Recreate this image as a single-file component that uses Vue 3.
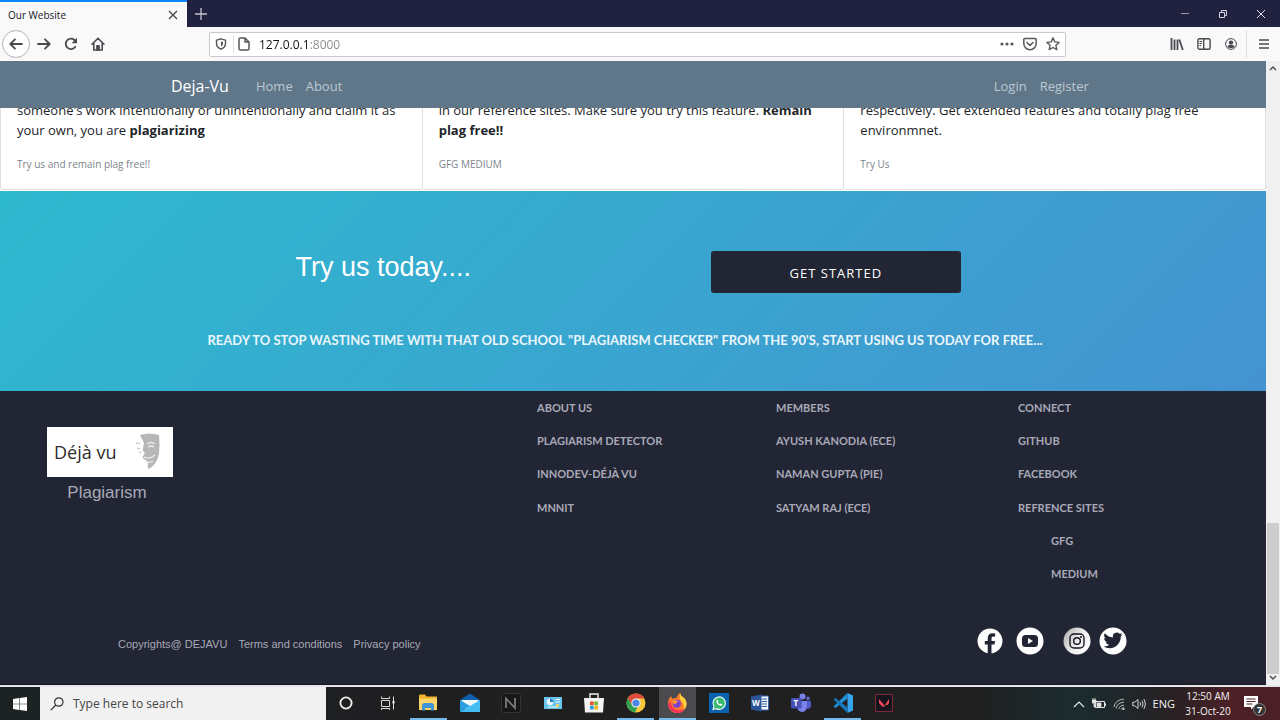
<script setup>
import { ref } from 'vue'

const address = ref('127.0.0.1:8000')
const query = ref('')

const cards = [
  {
    text: "someone's work intentionally or unintentionally and claim it as your own, you are ",
    strong: 'plagiarizing',
    note: 'Try us and remain plag free!!',
  },
  {
    text: 'in our reference sites. Make sure you try this feature. ',
    strong: 'Remain plag free!!',
    note: 'GFG MEDIUM',
  },
  {
    text: 'respectively. Get extended features and totally plag free environmnet.',
    strong: '',
    note: 'Try Us',
  },
]

const columns = [
  [{ t: 'About us' }, { t: 'Plagiarism Detector' }, { t: 'InnoDev-Déjà Vu' }, { t: 'MNNIT' }],
  [{ t: 'Members' }, { t: 'Ayush Kanodia (ECE)' }, { t: 'Naman Gupta (PIE)' }, { t: 'Satyam Raj (ECE)' }],
  [
    { t: 'Connect' },
    { t: 'Github' },
    { t: 'Facebook' },
    { t: 'Refrence Sites' },
    { t: 'GFG', sub: true },
    { t: 'Medium', sub: true },
  ],
]
</script>

<template>
  <div class="screen">
    <header class="titlebar">
      <div class="tab">
        <span>Our Website</span>
        <button type="button" aria-label="Close tab">
          <svg width="10" height="10" viewBox="0 0 10 10"><path d="M1 1l8 8M9 1l-8 8" stroke="#444" stroke-width="1.3" /></svg>
        </button>
      </div>
      <button type="button" class="newtab" aria-label="New tab">
        <svg width="12" height="12" viewBox="0 0 12 12"><path d="M6 0v12M0 6h12" stroke="#c4c4cf" stroke-width="1.3" /></svg>
      </button>
      <div class="winbtns">
        <button type="button" aria-label="Minimize">
          <svg width="10" height="10" viewBox="0 0 10 10"><path d="M1 4.500h8" stroke="#9a9bb0" /></svg>
        </button>
        <button type="button" aria-label="Restore">
          <svg width="10" height="10" viewBox="0 0 10 10" fill="none" stroke="#d4d4de"><path d="M1.500 3.500h5v5h-5zM3.500 3V1.500h5v5H7" /></svg>
        </button>
        <button type="button" aria-label="Close">
          <svg width="10" height="10" viewBox="0 0 10 10"><path d="M1 1l8 8M9 1l-8 8" stroke="#e2e2ea" /></svg>
        </button>
      </div>
    </header>

    <div class="toolbar">
      <div class="navbtns">
        <button type="button" class="back" aria-label="Back">
          <svg width="14" height="14" viewBox="0 0 14 14" fill="none" stroke="#4a4a4f" stroke-width="1.8" stroke-linecap="round" stroke-linejoin="round"><path d="M13 7H1.500M6 2.300L1.300 7 6 11.700" /></svg>
        </button>
        <button type="button" aria-label="Forward">
          <svg width="14" height="14" viewBox="0 0 14 14" fill="none" stroke="#4a4a4f" stroke-width="1.8" stroke-linecap="round" stroke-linejoin="round"><path d="M1 7h11.500M8 2.300L12.700 7 8 11.700" /></svg>
        </button>
        <button type="button" aria-label="Reload">
          <svg width="14" height="14" viewBox="0 0 14 14" fill="none" stroke="#4a4a4f" stroke-width="1.8" stroke-linecap="round"><path d="M11.300 9.800A5.200 5.200 0 1 1 11 3.600" /><path d="M13 .8v5.400H7.600z" fill="#4a4a4f" stroke="none" /></svg>
        </button>
        <button type="button" aria-label="Home">
          <svg width="14" height="14" viewBox="0 0 14 14" fill="none" stroke="#4a4a4f" stroke-width="1.600" stroke-linecap="round" stroke-linejoin="round"><path d="M1 7.200L7 1.200l6 6M2.800 6.500V13h8.400V6.500" /><path d="M5.700 13V8.500h2.600V13z" fill="#4a4a4f" stroke-width="1" /></svg>
        </button>
      </div>
      <div class="urlbar">
        <svg width="12" height="12" viewBox="0 0 12 12" fill="none" stroke="#57575c" stroke-width="1.400"><path d="M6 .8l4.500 1.400v3.300c0 2.700-1.800 4.600-4.500 5.700C3.300 10.100 1.500 8.200 1.500 5.500V2.200z" /><path d="M6 3.400v5c1.300-.7 2-1.700 2-3V3.900z" fill="#57575c" stroke="none" /></svg>
        <i class="sep"></i>
        <svg width="12" height="14" viewBox="0 0 12 14" fill="none" stroke="#57575c" stroke-width="1.500" stroke-linejoin="round"><path d="M2.500 1H7l4 4v6.500q0 1.500-1.500 1.500h-7Q1 13 1 11.500v-9Q1 1 2.500 1zM7 1v4h4" /></svg>
        <input v-model="address" type="text" aria-label="Address" />
        <svg width="14" height="14" viewBox="0 0 14 14" fill="#57575c"><circle cx="2" cy="7" r="1.600" /><circle cx="7" cy="7" r="1.600" /><circle cx="12" cy="7" r="1.600" /></svg>
        <svg width="14" height="14" viewBox="0 0 14 14" fill="none" stroke="#57575c" stroke-width="1.500" stroke-linecap="round" stroke-linejoin="round"><path d="M2 1.500h10q1.200 0 1.200 1.200V6.500a6.200 6.200 0 0 1-12.400 0V2.700Q.8 1.500 2 1.500zM4 5.500l3 2.900 3-2.900" /></svg>
        <svg width="14" height="14" viewBox="0 0 14 14" fill="none" stroke="#57575c" stroke-width="1.400" stroke-linejoin="round"><path d="M7 .9l1.800 4 4.300.5-3.200 2.900.9 4.300L7 10.500l-3.800 2.100.9-4.300L.9 5.400l4.300-.5z" /></svg>
      </div>
      <div class="tools">
        <button type="button" aria-label="Library">
          <svg width="14" height="14" viewBox="0 0 14 14" fill="none" stroke="#4a4a4f" stroke-width="1.800"><path d="M1.500 1v12M4.500 2.500V13M7.500 2.500V13M9.300 2.500L12.800 13" /></svg>
        </button>
        <button type="button" aria-label="Sidebar">
          <svg width="14" height="14" viewBox="0 0 14 14" fill="none" stroke="#4a4a4f" stroke-width="1.400"><rect x=".9" y="1.700" width="12.200" height="10.600" rx="1.800" /><path d="M6.700 2v10" /><path d="M2.500 4.500h2.500M2.500 6.500h2.500M2.500 8.500h1.500" stroke-width="1" /></svg>
        </button>
        <button type="button" aria-label="Account">
          <svg width="12" height="12" viewBox="0 0 12 12"><circle cx="6" cy="6" r="5.400" fill="none" stroke="#4a4a4f" /><circle cx="6" cy="4.600" r="2.200" fill="#4a4a4f" /><path d="M2.200 8.600q1-1.400 2.500-1.600h2.600q1.500.2 2.500 1.600Q8.600 10.200 6 10.200T2.200 8.600z" fill="#4a4a4f" /></svg>
        </button>
        <button type="button" class="menu" aria-label="Menu">
          <svg width="10" height="12" viewBox="0 0 10 12"><path d="M0 2h10M0 6h10M0 10h10" stroke="#4a4a4f" stroke-width="1.600" /></svg>
        </button>
      </div>
    </div>

    <div class="viewport">
      <div class="page">
        <nav class="sitenav">
          <a class="brand" href="#">Deja-Vu</a>
          <a href="#">Home</a>
          <a href="#">About</a>
          <a class="push" href="#">Login</a>
          <a href="#">Register</a>
        </nav>

        <section class="cards">
          <article v-for="c in cards" :key="c.note" class="card">
            <p>{{ c.text }}<b v-if="c.strong">{{ c.strong }}</b></p>
            <small>{{ c.note }}</small>
          </article>
        </section>

        <section class="hero">
          <div class="cta">
            <h2>Try us today....</h2>
            <button type="button">GET STARTED</button>
          </div>
          <p>Ready to stop wasting time with that old school "Plagiarism checker" from the 90's, start using us today for free...</p>
        </section>

        <footer class="footer">
          <div class="foot-top">
            <div class="brandbox">
              <div class="logo">
                <span>Déjà vu</span>
                <svg width="26" height="40" viewBox="0 0 26 40">
                  <path d="M5 3q9-3 19 0 1 10 0 19-2 10-10 15-2-1-1-5l-2-4q-4-1-3-4l2-3q-3-2-2-5l1-5Q7 7 5 3z" fill="#b7b7b7" />
                  <path d="M12 12q4-3 8 0M13 15q3-2 6 0M9 25q5 3 11-2M11 30q4 1 7-1" fill="none" stroke="#ededed" stroke-width="1.300" />
                  <path d="M1 12q2-2 4 0M2 16l3 1M4 20l2 1" fill="none" stroke="#cfcfcf" stroke-width="1.500" />
                </svg>
              </div>
              <span class="caption">Plagiarism</span>
            </div>
            <ul v-for="(col, i) in columns" :key="i">
              <li v-for="l in col" :key="l.t" :class="{ sub: l.sub }"><a href="#">{{ l.t }}</a></li>
            </ul>
          </div>
          <div class="foot-bottom">
            <span>Copyrights@ DEJAVU</span>
            <a href="#">Terms and conditions</a>
            <a href="#">Privacy policy</a>
            <div class="social">
              <a href="#" aria-label="Facebook">
                <svg width="26" height="26" viewBox="0 0 26 26"><circle cx="13" cy="13" r="12.500" fill="#fff" /><path d="M10.700 26v-9.400H7.800v-3.500h2.900v-2.600c0-3.400 1.800-5.300 5-5.300l2.500.2v3.200h-1.700c-1.500 0-2 .8-2 2v2.500h3.600l-.6 3.500h-3V26z" fill="#222533" /></svg>
              </a>
              <a href="#" aria-label="YouTube">
                <svg width="28" height="28" viewBox="0 0 28 28"><circle cx="14" cy="14" r="13.500" fill="#fff" /><rect x="6" y="8" width="16" height="12" rx="3.500" fill="#222533" /><path d="M12 11v6l5-3z" fill="#fff" /></svg>
              </a>
              <a class="gap" href="#" aria-label="Instagram">
                <svg width="28" height="28" viewBox="0 0 28 28"><defs><linearGradient id="ig" x1="0" y1="0" x2="1" y2=".6"><stop offset="0" stop-color="#a8a8a8" /><stop offset=".6" stop-color="#eee" /><stop offset="1" stop-color="#fff" /></linearGradient></defs><circle cx="14" cy="14" r="13.500" fill="url(#ig)" /><rect x="7" y="7" width="14" height="14" rx="4" fill="none" stroke="#16171f" stroke-width="1.400" /><circle cx="14" cy="14" r="3.300" fill="none" stroke="#16171f" stroke-width="1.400" /><circle cx="18" cy="10" r="1" fill="#16171f" /></svg>
              </a>
              <a href="#" aria-label="Twitter">
                <svg width="28" height="28" viewBox="0 0 28 28"><circle cx="14" cy="14" r="13.500" fill="#fff" /><path transform="translate(4.500 3.800) scale(.8)" d="M23.950 4.570a10 10 0 0 1-2.820.77 4.960 4.960 0 0 0 2.160-2.720c-.95.560-2 .960-3.120 1.180a4.920 4.920 0 0 0-8.380 4.480C7.690 8.100 4.070 6.130 1.640 3.160a4.920 4.920 0 0 0 1.520 6.570 4.900 4.900 0 0 1-2.230-.61v.06a4.920 4.920 0 0 0 3.950 4.830 5 5 0 0 1-2.210.08 4.940 4.940 0 0 0 4.600 3.420A9.870 9.870 0 0 1 0 19.540a13.990 13.990 0 0 0 7.550 2.210c9.050 0 14-7.500 14-13.980 0-.21 0-.42-.02-.63a9.940 9.940 0 0 0 2.420-2.570z" fill="#222533" /></svg>
              </a>
            </div>
          </div>
        </footer>
      </div>
      <div class="scroll">
        <svg width="8" height="6" viewBox="0 0 8 6"><path d="M1 5l3-3 3 3" fill="none" stroke="#505050" stroke-width="1.500" /></svg>
        <div class="track"><i></i></div>
        <svg width="8" height="6" viewBox="0 0 8 6"><path d="M1 1l3 3 3-3" fill="none" stroke="#505050" stroke-width="1.500" /></svg>
      </div>
    </div>

    <div class="taskbar">
      <button type="button" class="start" aria-label="Start">
        <svg width="14" height="14" viewBox="0 0 14 14" fill="#fff"><path d="M0 2l6.500-1v5.700H0zM7 .9L14 0v6.700H7zM0 7.200h6.500V13L0 12zM7 7.200h7V14l-7-1z" /></svg>
      </button>
      <label class="search">
        <svg width="14" height="14" viewBox="0 0 14 14" fill="none" stroke="#333" stroke-width="1.200"><circle cx="8.800" cy="5" r="4.200" /><path d="M5.800 8L.8 13.200" /></svg>
        <input v-model="query" type="text" placeholder="Type here to search" aria-label="Type here to search" />
      </label>
      <div class="apps">
        <button type="button" aria-label="Cortana"><svg viewBox="0 0 20 20"><circle cx="10" cy="10" r="5.600" fill="none" stroke="#f2f2f2" stroke-width="1.800" /></svg></button>
        <button type="button" aria-label="Task view"><svg viewBox="0 0 20 20" fill="none" stroke="#d8d8d8"><path d="M4.500 7.500h8v6h-8zM4.500 3.500v2h8v-2M4.500 17v-1.500h8V17M16.500 3.500v13" /><path d="M15.500 8h2v2.500h-2z" fill="#fff" stroke="none" /></svg></button>
        <button type="button" class="open" aria-label="File Explorer"><svg viewBox="0 0 20 20"><path d="M1 2.500q0-1 1-1h5l1.500 2H19V17H1z" fill="#f3b32c" /><path d="M1 5.500h18V17H1z" fill="#fbd467" /><path d="M4 17.500v-5q0-2.500 2.500-2.500h7q2.500 0 2.500 2.500v5h-3V15H7v2.500z" fill="#3f95d8" /></svg></button>
        <button type="button" aria-label="Mail"><svg viewBox="0 0 20 20"><path d="M0 7L10 .5 20 7v3H0z" fill="#0f5fae" /><path d="M1.500 7h17v9h-17z" fill="#eef7fc" /><path d="M0 7l10 6L0 19z" fill="#2a9fe0" /><path d="M20 7v12H0l10-6z" fill="#43bdf2" /></svg></button>
        <button type="button" aria-label="Nitro"><svg viewBox="0 0 20 20"><rect x=".5" y=".5" width="19" height="19" rx="2" fill="#171717" stroke="#333" /><path d="M5 15V5.500L14 15V5" fill="none" stroke="#7b7b7b" stroke-width="1.800" /></svg></button>
        <button type="button" aria-label="Control Panel"><svg viewBox="0 0 20 20"><rect x="1" y="4" width="18" height="12" fill="#67c5ee" /><circle cx="7" cy="9" r="3.300" fill="#e9f7fd" /><path d="M7 9V5.700A3.300 3.300 0 0 1 10.300 9z" fill="#2b7fc0" /><path d="M12.500 6.500h4.500M12.500 9h4.500M5 14h10" stroke="#fff" /><rect x="13" y="11" width="3" height="3" fill="#e8d36c" /></svg></button>
        <button type="button" aria-label="Store"><svg viewBox="0 0 20 20"><path d="M6 5V1h8v4" fill="none" stroke="#f0f0f0" stroke-width="1.400" /><path d="M0 5h20l-1 14.500H1z" fill="#f3f3f3" /><path d="M6 8.500h3.700v3.700H6z" fill="#e8502c" /><path d="M10.300 8.500H14v3.700h-3.700z" fill="#7db72f" /><path d="M6 12.800h3.700v3.700H6z" fill="#2a9fe0" /><path d="M10.300 12.800H14v3.700h-3.700z" fill="#f7b718" /></svg></button>
        <button type="button" class="open" aria-label="Chrome"><svg viewBox="0 0 20 20"><circle cx="10" cy="10" r="9.500" fill="#f9c73b" /><path d="M1.800 5.200A9.500 9.500 0 0 1 18.400 5.600H10L5.700 12.500z" fill="#de4b3c" /><path d="M1.800 5.200l4.500 7.300 5.300 1.200-2.600 5.800A9.500 9.500 0 0 1 1.800 5.200z" fill="#2da150" /><circle cx="10" cy="10" r="4.600" fill="#f5f5f5" /><circle cx="10" cy="10" r="3.600" fill="#4a88ec" /></svg></button>
        <button type="button" class="open active" aria-label="Firefox"><svg viewBox="0 0 20 20"><path d="M1 11Q1 6 4 3l1.500 3q2-1.500 4-1Q10 2 13 0q.5 3 3.500 4.500Q19.500 7 19.500 11a9.200 9.200 0 0 1-18.500 0z" fill="#ff7a2b" /><path d="M13 0q.5 3 3.500 4.500Q19.500 7 19.500 11q0 4-3.500 6.500 2-6-2-10-2-3-1-7.500z" fill="#ffd23c" /><path d="M1 11q1 7.500 9 9 6 0 8.500-5-4 3.500-9 2Q4 15 3.500 8z" fill="#f5325c" /><circle cx="9.800" cy="10.800" r="4" fill="#7b3fd1" /><path d="M5.500 8q3-2 6 1-3 .5-3 2.500-2 0-3-3.500z" fill="#ff9b2f" /></svg></button>
        <button type="button" aria-label="WhatsApp"><svg viewBox="0 0 20 20"><path d="M0 0h20v20H0z" fill="#0862b0" /><path d="M4 16.500l.9-3.200a6.200 6.200 0 1 1 2.400 2.300z" fill="#37b96c" stroke="#e9f6ef" stroke-width="1.200" /><path d="M7.800 7q.8-.6 1.200.3l.4 1-.6.900q.8 1.500 2.200 2l.9-.8 1.600.9q-.2 1.500-1.700 1.500-4-.8-4.500-4.500z" fill="#fff" /></svg></button>
        <button type="button" aria-label="Word"><svg viewBox="0 0 20 20"><path d="M10 3h8.500v14H10z" fill="#f5f8fc" stroke="#3a66ab" /><path d="M12 6h5M12 8.500h5M12 11h5M12 13.500h5" stroke="#2f5ca8" /><path d="M1 3.500L11.500 1.500v17L1 16.500z" fill="#2a5699" /><text x="2" y="13" class="glyph">W</text></svg></button>
        <button type="button" aria-label="Teams"><svg viewBox="0 0 20 20"><circle cx="17" cy="5.500" r="2" fill="#5b62c4" /><path d="M14 8h6v5.500q-1 3-4.500 2.500z" fill="#5059c9" /><circle cx="11.500" cy="3.600" r="3" fill="#7b83eb" /><path d="M7 8h9v6q-1 5-5 5-4-.5-4.500-4z" fill="#7b83eb" /><rect y="5" width="10.500" height="10.500" rx="1" fill="#474fb8" /><text x="2.600" y="13" class="glyph">T</text></svg></button>
        <button type="button" class="open" aria-label="Visual Studio Code"><svg viewBox="0 0 20 20"><path d="M14.500 0L20 2.500v15L14.500 20z" fill="#35a6ee" /><path d="M14.500 0v5.500L2.500 15 .5 13.500z" fill="#1f8fd8" /><path d="M14.500 20v-5.500L2.500 5 .5 6.500z" fill="#1577bd" /></svg></button>
        <button type="button" aria-label="Valorant"><svg viewBox="0 0 20 20"><rect x="1.500" y="1.500" width="17" height="17" fill="#16141c" stroke="#7a2b3a" /><path d="M5 6l6.500 7.500H8L5 10zM15 6v4l-1.500 2H11z" fill="#f2475a" /></svg></button>
      </div>
      <div class="tray">
        <svg width="12" height="8" viewBox="0 0 12 8"><path d="M1 7l5-5 5 5" fill="none" stroke="#e5e5e5" stroke-width="1.200" /></svg>
        <svg width="14" height="12" viewBox="0 0 14 12"><path d="M3.500 3.500h9v6h-9zM12.500 5.500h1v2h-1" fill="none" stroke="#e5e5e5" /><path d="M5 5h4v3.500H5zM0 2h4v3H0zM1 0v2M3 0v2M2 5v4h2" fill="#e5e5e5" stroke="#e5e5e5" stroke-width=".8" /></svg>
        <svg width="12" height="12" viewBox="0 0 12 12" fill="none" stroke="#b9b9b9"><path d="M1 9Q2 2 11 1M3 10.500Q4 5 11 4M5.500 11Q6.500 7.500 11 7M8 11.500Q8.500 10 11 9.500" /><circle cx="10.500" cy="11" r=".8" fill="#fff" /></svg>
        <svg width="14" height="12" viewBox="0 0 14 12" fill="none" stroke="#d5d5d5"><path d="M.8 4.200h2L6 1.500v9L2.800 7.800h-2zM8 4.200q1.200 1.800 0 3.600M10 2.700q2.200 3.300 0 6.600M12 1.200q3 4.800 0 9.600" /></svg>
        <span class="lang">ENG</span>
        <div class="clock"><span>12:50 AM</span><span>31-Oct-20</span></div>
        <button type="button" class="notes" aria-label="7 notifications">
          <svg width="14" height="14" viewBox="0 0 14 14"><path d="M0 0h14v11H9.500L7 13.500V11H0z" fill="#fff" /><path d="M2.500 3h9M2.500 5.500h9M2.500 8h6" stroke="#4b2027" /></svg>
          <b>7</b>
        </button>
      </div>
    </div>
  </div>
</template>

<style>
body {
  background: #fff;
}
</style>

<style scoped>
.screen {
  min-height: 100vh;
  display: flex;
  flex-direction: column;
  font-family: "Open Sans", "Noto Sans", sans-serif;
  color: #212529;
}
.screen * {
  box-sizing: border-box;
}
button {
  border: 0;
  padding: 0;
  background: none;
  font: inherit;
  display: flex;
  align-items: center;
  justify-content: center;
}
a {
  color: inherit;
  text-decoration: none;
}
svg {
  display: block;
  flex: none;
}
input {
  border: 0;
  outline: 0;
  padding: 0;
  min-width: 0;
  flex: 1;
  background: none;
  font: inherit;
}

.titlebar {
  height: 27px;
  display: flex;
  background: #20223f;
}
.tab {
  width: 187px;
  padding: 0 9px 0 8px;
  display: flex;
  align-items: center;
  justify-content: space-between;
  background: #f9f9fa;
  border-top: 2px solid #0a84ff;
  font-size: 10px;
  color: #18181c;
}
.newtab {
  width: 28px;
}
.winbtns {
  margin-left: auto;
  display: flex;
}
.winbtns button {
  width: 38px;
}

.toolbar {
  height: 34px;
  display: flex;
  align-items: center;
  justify-content: space-between;
  background: #f9f9fa;
}
.navbtns {
  width: 209px;
  display: flex;
  align-items: center;
  padding-left: 2px;
}
.navbtns button {
  width: 27px;
  height: 28px;
}
.navbtns .back {
  width: 28px;
  border: 1px solid #b5b5b8;
  border-radius: 50%;
  background: #fff;
}
.urlbar {
  flex: 1;
  height: 25px;
  display: flex;
  align-items: center;
  gap: 9px;
  padding: 0 5px;
  border: 1px solid #c9c9cc;
  border-radius: 2px;
  background: #fff;
}
.sep {
  width: 1px;
  height: 17px;
  margin-right: -5px;
  margin-left: -3px;
  background: #e3e3e5;
}
.urlbar input {
  font-size: 12px;
  color: transparent;
  caret-color: #222;
  background: linear-gradient(90deg, #111 49px, #8a8a8f 49px);
  background-clip: text;
}
.tools {
  width: 214px;
  display: flex;
  justify-content: flex-end;
}
.tools button {
  width: 27px;
  height: 28px;
}
.tools .menu {
  width: 34px;
  margin-left: 2px;
  border-left: 1px solid #dedee0;
}

.viewport {
  flex: 1;
  display: flex;
}
.page {
  flex: 1;
  min-width: 0;
  display: flex;
  flex-direction: column;
}
.sitenav {
  height: 47px;
  padding: 3px 14% 0 13.5%;
  display: flex;
  align-items: center;
  gap: 13px;
  background: #60778a;
  color: #bdc8d0;
  font-size: 13px;
}
.brand {
  margin-right: 14px;
  font-size: 16px;
  color: #fff;
}
.push {
  margin-left: auto;
}
.cards {
  height: 83px;
  overflow: hidden;
  display: flex;
  align-items: flex-end;
  padding-bottom: 1px;
}
.card {
  flex: 1;
  height: 120px;
  padding: 0 16px 17px;
  display: flex;
  flex-direction: column;
  justify-content: flex-end;
  border: 1px solid #dfdfdf;
  border-left-width: 0;
  border-radius: 0 0 3px 3px;
}
.card:first-child {
  border-left-width: 1px;
}
.card p {
  margin: 0 0 16px;
  font-size: 13px;
  line-height: 20px;
}
.card small {
  font-size: 10px;
  line-height: 16px;
  color: #7b838a;
}

.hero {
  height: 200px;
  padding-top: 60px;
  background: linear-gradient(135deg, #2eb9cf, #4493d0);
  color: #fff;
}
.cta {
  padding: 0 16.1% 0 12.4%;
  display: grid;
  grid-template-columns: 1fr 1fr;
  justify-items: center;
}
.cta h2 {
  margin: 0;
  font: 27px/32px "Liberation Sans", Arial, sans-serif;
}
.cta button {
  width: 250px;
  height: 42px;
  padding-top: 2px;
  border-radius: 3px;
  background: #222533;
  color: #fff;
  font-size: 13px;
  letter-spacing: 1px;
}
.hero p {
  margin: 37px 16px 0 0;
  text-align: center;
  text-transform: uppercase;
  font: bold 13px/20px Lato, "Liberation Sans", sans-serif;
  color: #eaf6fb;
}

.footer {
  flex: 1;
  min-height: 294px;
  display: flex;
  flex-direction: column;
  background: #222533;
  border-bottom: 1px solid #15161f;
  color: #a8a9b8;
}
.foot-top {
  display: grid;
  grid-template-columns: 537fr 239fr 242fr 248fr;
}
.brandbox {
  width: 126px;
  margin: 36px 0 0 47px;
}
.logo {
  height: 50px;
  padding: 0 12px 0 7px;
  display: flex;
  align-items: center;
  justify-content: space-between;
  background: #fff;
  color: #2c2c2c;
  font-size: 18px;
}
.caption {
  display: block;
  padding: 6px 6px 0 0;
  text-align: center;
  font: 17px/20px "Liberation Sans", Arial, sans-serif;
}
.foot-top ul {
  min-height: 200px;
  margin: 0;
  padding: 0;
  list-style: none;
  display: grid;
  grid-template-rows: repeat(6, 1fr);
  align-items: center;
  text-transform: uppercase;
  font: bold 11px/16px Lato, "Liberation Sans", sans-serif;
}
.sub {
  padding-left: 33px;
}
.foot-bottom {
  margin-top: 36px;
  padding: 0 11% 0 118px;
  display: flex;
  align-items: flex-end;
  gap: 11px;
  font: 11px/22px "Liberation Sans", Arial, sans-serif;
}
.social {
  margin-left: auto;
  display: flex;
  align-items: center;
  gap: 8px;
}
.social a:first-child {
  margin-right: 5px;
}
.social .gap {
  margin-left: 11px;
}

.scroll {
  width: 14px;
  padding: 4px 0;
  display: flex;
  flex-direction: column;
  align-items: center;
  background: #f0f0f0;
}
.track {
  flex: 1;
  width: 100%;
  padding: 0 1px;
  display: flex;
  flex-direction: column;
  justify-content: flex-end;
}
.track i {
  height: 25%;
  margin-bottom: 1px;
  background: #cdcdcd;
}

.taskbar {
  height: 35px;
  display: flex;
  border-top: 2px solid #e6e6ea;
  background: linear-gradient(90deg, #1c2423 0, #1f1f21 30%, #202020 76%, #1b2c30 84%, #20272a 88%, #2a2123 92%, #4b2027 96%, #4a2026);
  color: #f2f2f2;
}
.start {
  width: 40px;
}
.search {
  width: 286px;
  display: flex;
  align-items: center;
  gap: 9px;
  padding: 0 10px;
  background: #f1f1f1;
  font-size: 12px;
}
.search input::placeholder {
  color: #444;
}
.apps {
  width: 576px;
  display: flex;
  justify-content: space-between;
  margin-left: 1px;
}
.apps button {
  width: 37px;
  flex: none;
  border-bottom: 2px solid transparent;
}
.apps svg {
  width: 20px;
  height: 20px;
}
.apps .open {
  border-color: #76b9ed;
}
.apps .active {
  background: #4b4b4d;
}
.glyph {
  font: bold 8px "Open Sans", sans-serif;
  fill: #fff;
}
.tray {
  margin-left: auto;
  padding-right: 14px;
  display: flex;
  align-items: center;
  gap: 7px;
  font-size: 11px;
}
.clock {
  width: 52px;
  display: flex;
  flex-direction: column;
  text-align: center;
  font-size: 10px;
  line-height: 15px;
}
.notes {
  position: relative;
  width: 22px;
  height: 24px;
  margin-left: 3px;
  color: #fff;
  align-items: flex-start;
  justify-content: flex-start;
  padding-top: 4px;
}
.notes b {
  position: absolute;
  right: 0;
  bottom: 0;
  width: 13px;
  height: 13px;
  border: 1px solid #8a8a8a;
  border-radius: 50%;
  background: #333;
  font-size: 9px;
  line-height: 11px;
}
</style>
